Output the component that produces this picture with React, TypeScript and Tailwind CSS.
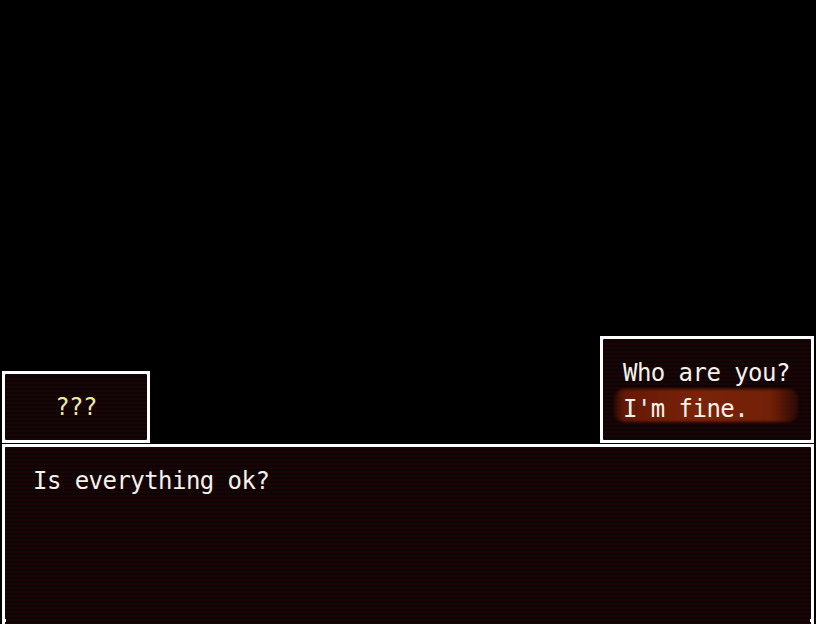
import React from "react";

const font = { fontFamily: '"DejaVu Sans Mono", "Liberation Mono", monospace' };

function Dots() {
  return (
    <>
      <span className="absolute -left-[3px] -top-[3px] h-[3px] w-[3px] bg-white" />
      <span className="absolute -right-[3px] -top-[3px] h-[3px] w-[3px] bg-white" />
      <span className="absolute -left-[3px] -bottom-[3px] h-[3px] w-[3px] bg-white" />
      <span className="absolute -right-[3px] -bottom-[3px] h-[3px] w-[3px] bg-white" />
    </>
  );
}

const panel =
  "relative border-[3px] border-white rounded-[4px] bg-[repeating-linear-gradient(180deg,#170507_0px,#170507_2px,#100304_2px,#100304_4px)]";

export default function App() {
  return (
    <div
      className="w-[816px] h-[624px] bg-black flex flex-col justify-end overflow-hidden text-[24px] tracking-[-0.55px] leading-none text-[#f6f2ea]"
      style={font}
    >
      <div className="flex items-end justify-between px-[2px]">
        <div className={`${panel} w-[148px] h-[72px] flex items-center justify-center`}>
          <Dots />
          <span className="text-[#f3e6a6]">???</span>
        </div>
        <div className={`${panel} w-[214px] h-[107px] flex flex-col pl-[20px] pt-[22px] gap-[12px]`}>
          <Dots />
          <div>Who are you?</div>
          <div className="relative">
            <span className="absolute -left-[9px] -top-[8px] w-[184px] h-[33px] rounded-[10px] blur-[1.5px] bg-[linear-gradient(90deg,rgba(100,24,6,0.25),#641806_5%,#7a2308_45%,#722008_85%,rgba(100,24,6,0.3))]" />
            <span className="relative">I'm fine.</span>
          </div>
        </div>
      </div>
      <div className="px-[2px] pt-[1px]">
        <div className={`${panel} border-b-0 rounded-b-none h-[180px] pl-[28px] pt-[22px]`}>
          <span className="absolute -left-[3px] -top-[3px] h-[3px] w-[3px] bg-white" />
          <span className="absolute -right-[3px] -top-[3px] h-[3px] w-[3px] bg-white" />
          <span className="absolute -left-[2px] bottom-[2px] h-[3px] w-[3px] bg-white" />
          <span className="absolute -right-[2px] bottom-[2px] h-[3px] w-[3px] bg-white" />
          <div>Is everything ok?</div>
        </div>
      </div>
    </div>
  );
}
